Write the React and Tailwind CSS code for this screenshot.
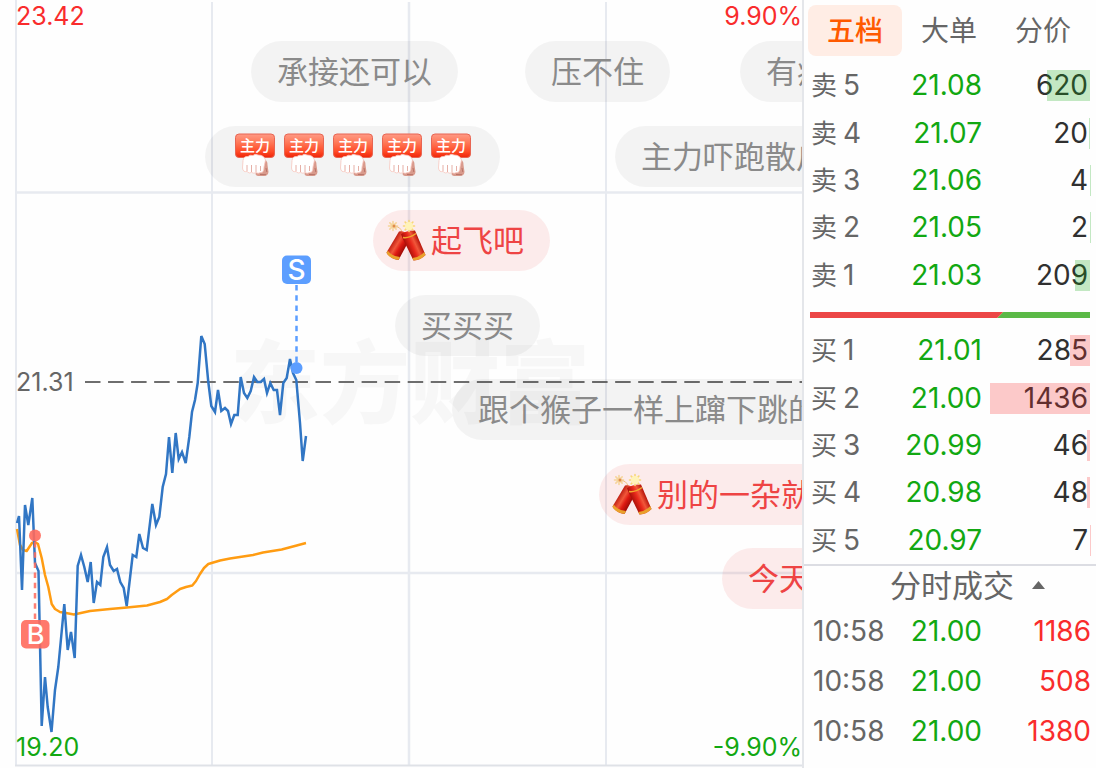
import React, { useState } from "react";

const PRICE_POINTS =
  "17,523 19,516 22,590 25,505 28.3,525 32.3,498 35,563 38.5,571 41.7,726 45,677 47.7,707 51.5,732 55,690 58.3,667 64.3,604 67.7,650 71,632 74.7,658 77.7,566 81,555 84.3,567 87.7,582 90.7,562 93.7,603 97,582 100.3,585 103.3,557 107,547 110,565 113.7,571 117,569 120.3,582 123.7,588 126.7,606 132.7,555 136.3,557 139.3,534 143,548 146.7,550 152.3,504 156,525 159.3,517 162.7,487 166,474 169,437 172.3,473 175.7,433 178.7,459 182,452 185.7,463 189.3,437 192,412 195,400 197.7,383 201.3,336 204.7,344 208.3,382 211.3,406 215,412 218,390 221.3,411 225,408 228,411 231,424 234.3,415 237.7,415 240.7,377 244,393 247.3,398 250.7,391 254,377 257.3,382 260.7,382 264,379 267,393 270.3,383 273.7,390 277,390 280,415 283.3,383 286.7,378 290,359 293,373 296.3,380 300,423 302.7,461 306,436";

const AVERAGE_POINTS =
  "17,529 20,545 23,550 26.7,551 32,543 35,542 38,544 41.7,558 45,575 48.3,587 51.7,604 55,609 60,612 66,613 74,614.5 90,611 110,609 127,607.5 147,605.5 160,602 167,599 171.7,595 180,589 186,587 192.3,585.5 196,581 200,574 204,568 208.3,564 220,560.5 230,558.5 253,555 263,552.5 281.7,549.5 296.7,545.5 306,543";

const SELLS = [
  ["卖", 5, "21.08", 620],
  ["卖", 4, "21.07", 20],
  ["卖", 3, "21.06", 4],
  ["卖", 2, "21.05", 2],
  ["卖", 1, "21.03", 209],
];

const BUYS = [
  ["买", 1, "21.01", 285],
  ["买", 2, "21.00", 1436],
  ["买", 3, "20.99", 46],
  ["买", 4, "20.98", 48],
  ["买", 5, "20.97", 7],
];

const TRADES = [
  ["10:58", "21.00", 1186],
  ["10:58", "21.00", 508],
  ["10:58", "21.00", 1380],
];

const MAX_VOLUME = 1436;

function FistIcon() {
  return (
    <svg viewBox="0 0 49 61" className="h-[61px] w-[49px] shrink-0" aria-hidden="true">
      <defs>
        <linearGradient id="badge" x1="0" y1="0" x2="0" y2="1">
          <stop offset="0" stopColor="#ff9a85" />
          <stop offset="0.35" stopColor="#ff7a5a" />
          <stop offset="0.75" stopColor="#ff4a26" />
          <stop offset="1" stopColor="#ee2408" />
        </linearGradient>
      </defs>
      <rect x="4.5" y="8" width="39" height="23.5" rx="3.5" fill="url(#badge)" stroke="#e86552" strokeWidth="1" />
      <text x="24" y="25" textAnchor="middle" fontSize="15" fontWeight="500" fill="#fff" fontFamily="Noto Sans CJK SC, sans-serif">
        主力
      </text>
      <path
        d="M31 32 Q37 34 36.500 39 L37.500 46 Q37 50.500 32 50 L27 50 Q23.500 49.500 25 46 Z"
        fill="#d99a8c"
      />
      <path d="M29 48.500 l6 .2 M35 42 l.8 4" stroke="#b87468" strokeWidth="1" fill="none" />
      <path
        d="M12 34.500 Q12.500 30 17 30.500 Q19 28.500 22 29.500 Q24 27.500 27 29 Q33 29 34.500 34 L33 41 Q33 47 29.500 46.500 Q27 48 25 46.500 Q23 48 20.500 46.500 Q18 48 16 45.500 Q12 46.500 11.500 42 Z"
        fill="#fff"
        stroke="#f7c6be"
        strokeWidth="0.8"
      />
      <path d="M16 39 v6 M20.500 39 v7 M25 39 v7 M29.500 40 v5" stroke="#e6b0a7" strokeWidth="1" fill="none" />
    </svg>
  );
}

function FirecrackerIcon() {
  const star = (x, y, r, color) => (
    <g stroke={color} strokeWidth="1.6" strokeLinecap="round">
      <path d={`M${x - r} ${y}H${x + r}M${x} ${y - r}V${y + r}M${x - r * 0.7} ${y - r * 0.7}L${x + r * 0.7} ${y + r * 0.7}M${x + r * 0.7} ${y - r * 0.7}L${x - r * 0.7} ${y + r * 0.7}`} />
    </g>
  );
  return (
    <svg viewBox="0 0 49 61" className="h-[61px] w-[49px] shrink-0" aria-hidden="true">
      <defs>
        <linearGradient id="crackerLeft" gradientUnits="userSpaceOnUse" x1="10" y1="31" x2="23" y2="39">
          <stop offset="0" stopColor="#b5140b" />
          <stop offset="0.4" stopColor="#f1573a" />
          <stop offset="0.65" stopColor="#de1a12" />
          <stop offset="1" stopColor="#9c0a06" />
        </linearGradient>
        <linearGradient id="crackerRight" gradientUnits="userSpaceOnUse" x1="25" y1="38" x2="38" y2="32">
          <stop offset="0" stopColor="#a80f08" />
          <stop offset="0.4" stopColor="#e8281b" />
          <stop offset="0.65" stopColor="#f1573a" />
          <stop offset="1" stopColor="#b5140b" />
        </linearGradient>
      </defs>
      {star(11, 16, 4.5, "#f5d59b")}
      <circle cx="12" cy="16" r="1.500" fill="#e08b4a" />
      <path d="M13 17 Q18 16 20 22" stroke="#efc07a" strokeWidth="1" fill="none" />
      <path d="M17 21.500 Q22 20 29 27 L16.500 50 Q8 49 4.500 42.500 Z" fill="url(#crackerLeft)" />
      <path d="M5.800 40.500 Q9 46 18 47 L16.500 50 Q8 49 4.500 43 Z" fill="#e9a12c" />
      <path d="M19 24 Q25 20 33 20.500 L43.500 45 Q39 50 31.500 50.500 L20 27 Z" fill="url(#crackerRight)" />
      <path d="M42.300 42 Q38 47 30.300 48 L31.500 50.500 Q39 50 43.500 45 Z" fill="#e9a12c" />
      <path d="M21 27.500 Q27 28.500 34 23.500" stroke="#f2a72f" strokeWidth="1.500" fill="none" />
      {star(27, 16, 5.5, "#f8d778")}
      <circle cx="27" cy="16" r="4" fill="#fff3b8" />
    </svg>
  );
}

function Pill({ children, hot = false, icon = null }) {
  return (
    <span
      className={`flex h-[61px] shrink-0 items-center rounded-full pr-[26px] text-[31px] whitespace-nowrap ${
        icon ? "pl-[9px]" : "pl-[26px]"
      } ${hot ? "bg-[#f04040]/10 text-[#ee4444]" : "bg-black/[0.045] text-[#8a8a8a]"}`}
    >
      {icon}
      <span className="pt-[2px]">{children}</span>
    </span>
  );
}

function Comments() {
  return (
    <div className="absolute inset-x-0 top-[41px] flex h-[568px] flex-col justify-between overflow-hidden">
      <div className="flex pl-[251px]">
        <Pill>承接还可以</Pill>
        <div className="flex gap-[70px] pl-[67px]">
          <Pill>压不住</Pill>
          <Pill>有病吧</Pill>
        </div>
      </div>
      <div className="flex gap-[115px] pl-[205px]">
        <span className="flex shrink-0 rounded-full bg-black/[0.045] pr-6 pl-[26px]">
          {[0, 1, 2, 3, 4].map((n) => (
            <FistIcon key={n} />
          ))}
        </span>
        <Pill>主力吓跑散户</Pill>
      </div>
      <div className="flex pl-[373px]">
        <Pill hot icon={<FirecrackerIcon />}>起飞吧</Pill>
      </div>
      <div className="flex pl-[395px]">
        <Pill>买买买</Pill>
      </div>
      <div className="flex pl-[452px]">
        <Pill>跟个猴子一样上蹿下跳的</Pill>
      </div>
      <div className="flex pl-[599px]">
        <Pill hot icon={<FirecrackerIcon />}>别的一杂就</Pill>
      </div>
      <div className="flex pl-[722px]">
        <Pill hot>今天</Pill>
      </div>
    </div>
  );
}

function Chart() {
  return (
    <section aria-label="分时图" className="relative min-w-0 flex-1 overflow-hidden border-r-2 border-[#e4e6ea]">
      <div className="absolute top-[319px] left-[230px] text-[90px] leading-[130px] font-black whitespace-nowrap text-black/[0.028]">
        东方财富
      </div>
      <svg viewBox="0 0 802 768" preserveAspectRatio="none" className="absolute inset-0 h-full w-full" aria-hidden="true">
        <g fill="none" stroke="#e7eaf0" strokeWidth="2">
          <path d="M16 0V766M212 2V765M606 2V765" />
          <path d="M409 2V765M16 192.500H802M16 573H802" strokeWidth="2.500" />
          <path d="M15 765.500H802" stroke="#dfe2e7" />
        </g>
        <path d="M85 382H802" stroke="#6e6e6e" strokeWidth="2" strokeDasharray="15.5 7.55" />
        <polyline points={AVERAGE_POINTS} fill="none" stroke="#ff9c12" strokeWidth="2.500" strokeLinejoin="round" />
        <polyline points={PRICE_POINTS} fill="none" stroke="#3176c4" strokeWidth="2.500" strokeLinejoin="miter" />
        <path d="M296.500 285V362" stroke="#5c9eff" strokeWidth="2.500" strokeDasharray="5.500 4.700" />
        <circle cx="296.500" cy="368" r="6" fill="#5c9eff" />
        <rect x="282" y="255.500" width="29" height="28.500" rx="5" fill="#5c9eff" />
        <text x="296.500" y="280" textAnchor="middle" fontSize="28" fontWeight="500" fill="#fff" fontFamily="Inter, sans-serif">
          S
        </text>
        <path d="M35 542V620" stroke="#ff6a5c" strokeOpacity="0.85" strokeWidth="2.500" strokeDasharray="5.500 4.700" />
        <circle cx="35" cy="535.500" r="6" fill="#ff6a5c" fillOpacity="0.9" />
        <rect x="21" y="620" width="28.500" height="28.500" rx="5" fill="#ff6a5c" fillOpacity="0.9" />
        <text x="35.500" y="644" textAnchor="middle" fontSize="27" fontWeight="500" fill="#fff" fontFamily="Inter, sans-serif">
          B
        </text>
      </svg>
      <div className="absolute inset-x-0 inset-y-px flex flex-col justify-between pl-4 text-[25px] leading-[30px]">
        <div className="flex justify-between text-[#f92c2c]">
          <span>23.42</span>
          <span>9.90%</span>
        </div>
        <div className="text-[#666666]">21.31</div>
        <div className="flex justify-between pb-[5px] text-[#12a812]">
          <span>19.20</span>
          <span>-9.90%</span>
        </div>
      </div>
      <Comments />
    </section>
  );
}

function DepthTable({ rows, label, barClass }) {
  return (
    <table aria-label={label} className="h-[237px] w-full table-fixed">
      <tbody>
        {rows.map(([side, level, price, volume]) => (
          <tr key={level}>
            <th scope="row" className="w-[70px] p-0 pl-[7px] text-left font-normal whitespace-nowrap text-[#666666]">
              <span className="mr-[6px] text-[26px]">{side}</span>
              {level}
            </th>
            <td className="w-[108px] p-0 text-right text-[#12a812]">{price}</td>
            <td className="p-0 pr-[6px] pl-[8px] text-right text-[#303030]">
              <div className="relative h-[31px] pr-[2px] leading-[31px]">
                {volume}
                <span
                  className={`absolute inset-y-0 right-0 ${barClass}`}
                  style={{ width: `${(volume / MAX_VOLUME) * 100}%` }}
                />
              </div>
            </td>
          </tr>
        ))}
      </tbody>
    </table>
  );
}

function OrderBook() {
  const tabs = ["五档", "大单", "分价"];
  const [active, setActive] = useState("五档");
  const [open, setOpen] = useState(true);
  return (
    <aside className="w-[292px] shrink-0 text-[28px] leading-[31px]">
      <div role="tablist" className="flex pt-[5px] pb-[6px] pl-1">
        {tabs.map((tab) => (
          <button
            key={tab}
            type="button"
            role="tab"
            aria-selected={tab === active}
            onClick={() => setActive(tab)}
            className={`h-[51px] w-[94px] rounded-lg pt-[2px] text-[28px] ${
              tab === active ? "bg-[#ffede5] font-medium text-[#ff5a00]" : "text-[#666666]"
            }`}
          >
            {tab}
          </button>
        ))}
      </div>
      <DepthTable rows={SELLS} label="卖盘" barClass="bg-[#12a812]/25" />
      <svg viewBox="0 0 281 6" preserveAspectRatio="none" className="mt-[13px] mb-[9px] ml-[6px] block h-[6px] w-[280px]" aria-hidden="true">
        <path d="M0 0H194L188 6H0Z" fill="#ec4646" />
        <path d="M194 0H281V6H188Z" fill="#5bb947" />
      </svg>
      <DepthTable rows={BUYS} label="买盘" barClass="bg-[#f92c2c]/25" />
      <button
        type="button"
        aria-expanded={open}
        onClick={() => setOpen(!open)}
        className="flex h-[42px] w-full items-center justify-center gap-[18px] border-t-2 border-[#dcdde3] pb-[2px] pl-[35px] text-[31px] text-[#666666]"
      >
        分时成交
        <svg viewBox="0 0 13 8" className="h-2 w-[13px]" aria-hidden="true">
          <path d="M6.500 0L13 8H0Z" fill="#666666" />
        </svg>
      </button>
      {open && (
        <table aria-label="分时成交" className="h-[150px] w-full table-fixed">
          <tbody>
            {TRADES.map(([time, price, volume]) => (
              <tr key={volume}>
                <td className="w-[88px] p-0 pl-[9px] text-[#666666]">{time}</td>
                <td className="w-[90px] p-0 text-right text-[#12a812]">{price}</td>
                <td className="p-0 pr-[5px] text-right text-[#f92c2c]">{volume}</td>
              </tr>
            ))}
          </tbody>
        </table>
      )}
    </aside>
  );
}

export default function App() {
  return (
    <main className="flex min-h-screen bg-[#fefefe] font-[Inter,'Noto_Sans_CJK_SC',sans-serif]">
      <Chart />
      <OrderBook />
    </main>
  );
}
